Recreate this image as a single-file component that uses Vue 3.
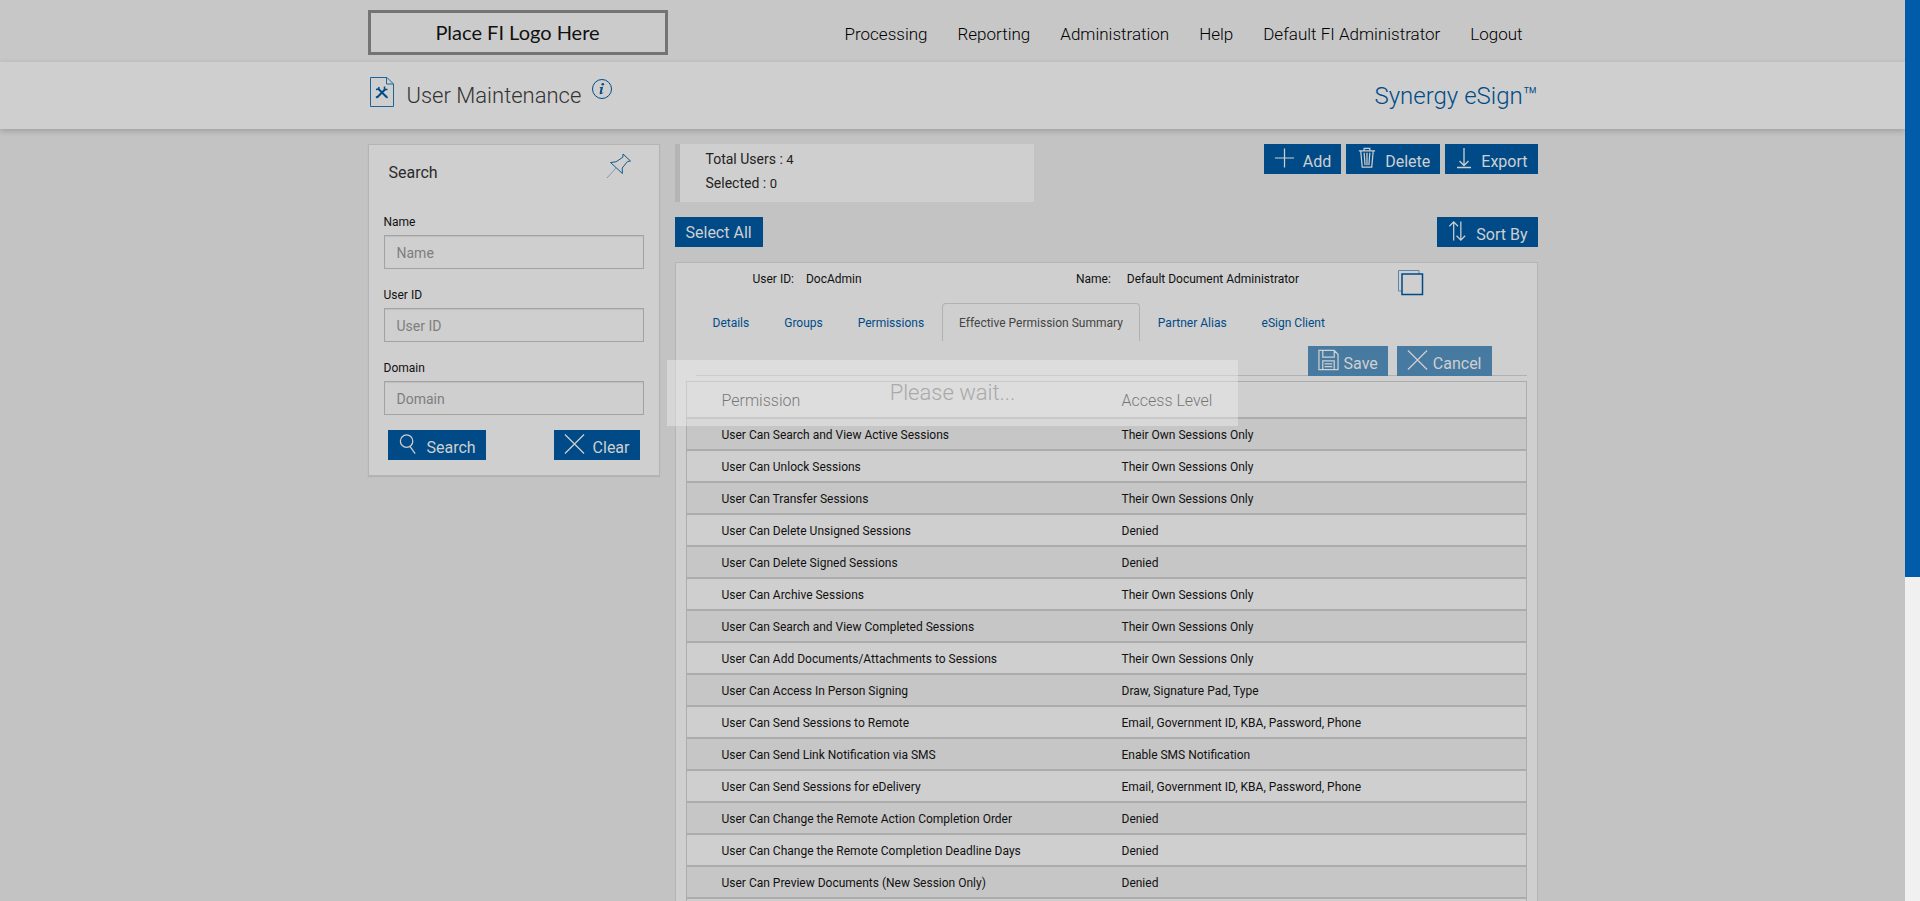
<script setup>
import { ref } from 'vue'

const nav = ['Processing', 'Reporting', 'Administration', 'Help', 'Default FI Administrator', 'Logout']
const fields = [
  { id: 'name', label: 'Name' },
  { id: 'user-id', label: 'User ID' },
  { id: 'domain', label: 'Domain' },
]
const form = ref({ name: '', 'user-id': '', domain: '' })
const tabs = ['Details', 'Groups', 'Permissions', 'Effective Permission Summary', 'Partner Alias', 'eSign Client']
const activeTab = ref('Effective Permission Summary')
const own = 'Their Own Sessions Only'
const rows = [
  ['User Can Search and View Active Sessions', own],
  ['User Can Unlock Sessions', own],
  ['User Can Transfer Sessions', own],
  ['User Can Delete Unsigned Sessions', 'Denied'],
  ['User Can Delete Signed Sessions', 'Denied'],
  ['User Can Archive Sessions', own],
  ['User Can Search and View Completed Sessions', own],
  ['User Can Add Documents/Attachments to Sessions', own],
  ['User Can Access In Person Signing', 'Draw, Signature Pad, Type'],
  ['User Can Send Sessions to Remote', 'Email, Government ID, KBA, Password, Phone'],
  ['User Can Send Link Notification via SMS', 'Enable SMS Notification'],
  ['User Can Send Sessions for eDelivery', 'Email, Government ID, KBA, Password, Phone'],
  ['User Can Change the Remote Action Completion Order', 'Denied'],
  ['User Can Change the Remote Completion Deadline Days', 'Denied'],
  ['User Can Preview Documents (New Session Only)', 'Denied'],
  ['', ''],
]
</script>

<template>
  <div class="window">
    <div class="page">
      <header class="topbar">
        <div class="container topbar-row">
          <div class="logo">Place FI Logo Here</div>
          <nav class="nav">
            <a v-for="item in nav" :key="item" href="#">{{ item }}</a>
          </nav>
        </div>
      </header>

      <div class="titlebar">
        <div class="container title-row">
          <svg class="doc-icon" width="24" height="30" viewBox="0 0 24 30" fill="none" stroke="#004b87">
            <path d="M.5.5H17L23.5 7v22.5H.5zM16.500 1v6H23" stroke="#1d6596" />
            <path d="M8 11.500l8.500 8.500M15.500 12l-8.500 8.500" stroke-width="2" />
            <path d="M6 12.500l2.500-.5.500-2M14.500 9.500v3h3M6 19.500l1.500 1.500M16 19l1.500 2" stroke-width="1.500" />
          </svg>
          <h1>User Maintenance</h1>
          <button class="info" aria-label="Information">
            <svg width="22" height="22" viewBox="0 0 22 22">
              <circle cx="11" cy="11" r="9.500" fill="none" stroke="#004b87" />
              <path d="M8.700 9.300l3.400-.6-1.500 6 .1.400 1.500-.9.200.4c-1 1.100-1.800 1.600-2.700 1.600-1 0-1.200-.6-1-1.400l1-4.400-1-.6z" fill="#004b87" />
              <circle cx="11.800" cy="6.300" r="1.300" fill="#004b87" />
            </svg>
          </button>
          <div class="product">Synergy eSign™</div>
        </div>
      </div>

      <main class="container content">
        <aside class="panel search">
          <div class="search-head">
            <h2>Search</h2>
            <button class="pin" aria-label="Pin search">
              <svg width="26" height="26" viewBox="0 0 26 26" fill="none" stroke="#175987">
                <path d="M17 1l7.500 7-3 .5-5.300 6.500.2 5.500L4.500 9.500l5.500-.7 6.800-4.500z" />
                <path d="M10 15L1 25" stroke="#7d9cb2" />
              </svg>
            </button>
          </div>
          <form @submit.prevent>
            <div v-for="f in fields" :key="f.id" class="field">
              <label :for="f.id">{{ f.label }}</label>
              <input :id="f.id" v-model="form[f.id]" type="text" :placeholder="f.label" />
            </div>
            <div class="search-actions">
              <button class="btn" type="submit">
                <svg class="ico" viewBox="0 0 22 22"><circle cx="9" cy="8" r="6.500" /><path d="M12.500 13.500L18 21" /></svg>
                <span>Search</span>
              </button>
              <button class="btn" type="reset">
                <svg class="ico" viewBox="0 0 22 22"><path d="M1 1l20 20M21 1L1 21" /></svg>
                <span>Clear</span>
              </button>
            </div>
          </form>
        </aside>

        <section class="main">
          <div class="row summary-row">
            <div class="stats">
              <div>Total Users : <small>4</small></div>
              <div>Selected : <small>0</small></div>
            </div>
            <div class="actions">
              <button class="btn">
                <svg class="ico" viewBox="0 0 22 22"><path d="M11 1v20M1 11h20" /></svg>
                <span>Add</span>
              </button>
              <button class="btn">
                <svg class="ico" viewBox="0 0 22 22"><path d="M3 3.500h17M8.500 3V1h6v2M5 4l1.500 16.500h10L18 4M8.500 5.500l1 13M11.500 5.500v13M14.500 5.500l-1 13" /></svg>
                <span>Delete</span>
              </button>
              <button class="btn">
                <svg class="ico narrow" viewBox="2 0 18 22"><path d="M11 1v17M6.500 14l4.500 4.500 4.500-4.500M4 20.500h14" /></svg>
                <span>Export</span>
              </button>
            </div>
          </div>

          <div class="row">
            <button class="btn plain">Select All</button>
            <button class="btn">
              <svg class="ico" viewBox="0 0 22 22"><path d="M7 21V1.500M2.500 6L7 1.500 11.500 6M14.500 1v19.500M10 16l4.500 4.500L19 16" /></svg>
              <span>Sort By</span>
            </button>
          </div>

          <article class="panel card">
            <div class="identity">
              <span class="key">User ID:</span><span class="uid">DocAdmin</span>
              <span class="key">Name:</span><span class="uname">Default Document Administrator</span>
              <button class="pick" aria-label="Select user">
                <svg width="26" height="26" viewBox="0 0 26 26" fill="none">
                  <path d="M4 21H.5V.5H21V4" stroke="#5f86a5" />
                  <rect x="4" y="4" width="20.500" height="20.500" stroke="#004b87" stroke-width="1.500" />
                </svg>
              </button>
            </div>

            <nav class="tabs">
              <a v-for="t in tabs" :key="t" href="#" :class="{ active: t === activeTab }" @click.prevent="activeTab = t">{{ t }}</a>
            </nav>

            <div class="save-row">
              <button class="btn tight" disabled>
                <svg class="ico" viewBox="0 0 22 22"><path d="M1 1h16l4 4v16H1zM5 1v7h12V1M5 21v-9h12v9M7 15h8M7 18h8" /></svg>
                <span>Save</span>
              </button>
              <button class="btn tight" disabled>
                <svg class="ico" viewBox="0 0 22 22"><path d="M1 1l20 20M21 1L1 21" /></svg>
                <span>Cancel</span>
              </button>
            </div>

            <table>
              <thead>
                <tr><th>Permission</th><th>Access Level</th></tr>
              </thead>
              <tbody>
                <tr v-for="r in rows" :key="r[0]"><td>{{ r[0] }}</td><td>{{ r[1] }}</td></tr>
              </tbody>
            </table>
          </article>
        </section>
      </main>

      <div class="wait" role="status">Please wait...</div>
    </div>
    <div class="scrollbar"><div class="thumb"></div></div>
  </div>
</template>

<style>
body {
  background: #c3c3c3;
}
</style>

<style scoped>
* {
  box-sizing: border-box;
}
.window {
  display: grid;
  grid-template-columns: minmax(0, 1fr) 15px;
  height: 100vh;
  overflow: hidden;
  font: 12px/20px Roboto, sans-serif;
  color: #111;
}
.page {
  position: relative;
  overflow: hidden;
  background: #c3c3c3;
}
.scrollbar {
  background: #f0f0f0;
}
.thumb {
  height: 64%;
  background: #005ba8;
}
.container {
  width: 100%;
  max-width: 1170px;
  margin: 0 auto;
}
a {
  text-decoration: none;
}
button {
  font-family: inherit;
  border: 0;
  padding: 0;
  background: none;
}
.topbar {
  background: #c7c7c7;
}
.topbar-row {
  display: flex;
  justify-content: space-between;
  align-items: center;
  height: 62px;
  padding: 3px 15px 0 0;
}
.logo {
  width: 300px;
  height: 45px;
  border: 3px solid #747474;
  background: #cbcbcb;
  font: 400 20px/38px Lato, sans-serif;
  text-align: center;
}
.nav {
  display: flex;
  gap: 30px;
  padding-top: 2px;
}
.nav a {
  font-size: 17px;
  font-weight: 300;
  line-height: 24px;
  color: #000;
}
.titlebar {
  position: relative;
  background: #cfcfcf;
  box-shadow: 0 2px 6px rgba(0, 0, 0, 0.2);
}
.title-row {
  display: flex;
  align-items: flex-start;
  height: 67px;
  padding: 15px 0 0 2px;
}
h1 {
  margin: 3px 0 0 13px;
  font-size: 22px;
  font-weight: 300;
  line-height: 32px;
  color: #333;
}
.info {
  margin: 1px 0 0 10px;
  height: 22px;
}
.product {
  margin: 3px 0 0 auto;
  font-size: 24px;
  font-weight: 300;
  line-height: 32px;
  color: #004b87;
}
.content {
  display: flex;
  align-items: flex-start;
  gap: 15px;
  padding-top: 15px;
}
.panel {
  background: #cfcfcf;
  border: 1px solid #b4b4b4;
}
.search {
  flex: 0 0 292px;
  padding: 8px 15px 15px;
  box-shadow: 0 1px 1px rgba(0, 0, 0, 0.08);
}
.search-head {
  display: flex;
  justify-content: space-between;
  padding: 0 12px 0 5px;
  height: 58px;
}
.search-head h2 {
  margin: 8px 0 0;
  font-size: 16px;
  font-weight: 400;
  line-height: 24px;
  color: #2b2b2b;
}
.pin {
  height: 24px;
}
.pin svg {
  display: block;
}
.field {
  margin-bottom: 15px;
}
.field label {
  display: block;
  line-height: 22px;
  margin-bottom: 2px;
}
.field input {
  display: block;
  width: 100%;
  height: 34px;
  padding: 2px 12px 0;
  border: 1px solid #a3a3a3;
  border-radius: 0;
  background: #cfcfcf;
  box-shadow: inset 0 1px 1px rgba(0, 0, 0, 0.08);
  font: 14px/20px Roboto, sans-serif;
}
.field input::placeholder {
  color: #7e7e7e;
}
.search-actions {
  display: flex;
  justify-content: space-between;
  padding: 0 4px;
}
.btn {
  display: flex;
  align-items: flex-start;
  gap: 8px;
  height: 30px;
  padding: 3px 10px 0;
  background: #004b87;
  color: #cfcfcf;
  font-size: 16px;
  line-height: 20px;
}
.btn span {
  padding-top: 5px;
}
.btn.plain {
  padding: 6px 11px 0;
}
.btn.tight {
  gap: 5px;
}
.btn:disabled {
  background: #477aa1;
}
.ico {
  width: 21px;
  height: 22px;
  fill: none;
  stroke: #cfcfcf;
  stroke-width: 1.3;
}
.ico.narrow {
  width: 18px;
}
.main {
  flex: 1;
  min-width: 0;
}
.row {
  display: flex;
  justify-content: space-between;
  align-items: flex-start;
  margin-bottom: 15px;
}
.stats {
  width: 359px;
  height: 58px;
  padding: 3px 26px;
  border-left: 5px solid #b4b4b4;
  background: #cfcfcf;
  font-size: 14px;
  line-height: 24px;
  color: #222;
}
.stats div {
  height: 24px;
}
.stats small {
  font-size: 13px;
  line-height: 20px;
}
.actions {
  display: flex;
  gap: 5px;
}
.card {
  padding: 7px 10px 0;
}
.identity {
  display: flex;
  height: 33px;
  padding-left: 67px;
  line-height: 18px;
}
.identity .uid {
  width: 282px;
  padding-left: 12px;
}
.identity .uname {
  width: 287px;
  padding-left: 16px;
}
.pick {
  height: 26px;
}
.pick svg {
  display: block;
}
.tabs {
  display: flex;
  gap: 1px;
  padding-left: 10px;
}
.tabs a {
  height: 38px;
  padding: 9px 16px;
  border: 1px solid transparent;
  border-bottom: 0;
  border-radius: 4px 4px 0 0;
  color: #004b87;
}
.tabs a.active {
  border-color: #b1b1b1;
  color: #444;
}
.save-row {
  display: flex;
  justify-content: flex-end;
  gap: 9px;
  margin: 5px 0 5px 10px;
  padding-right: 35px;
  height: 30px;
  box-shadow: inset 0 -1px #b1b1b1;
}
table {
  width: 100%;
  table-layout: fixed;
  border-collapse: separate;
  border-spacing: 0;
  border: 1px solid #acacac;
}
th,
td {
  padding: 2px 0 0 35px;
  height: 32px;
  border-bottom: 2px solid #acacac;
  text-align: left;
}
th {
  height: 37px;
  font-size: 16px;
  font-weight: 300;
}
th:first-child {
  width: 400px;
}
tbody tr:nth-child(odd) {
  background: #c6c6c6;
}
.wait {
  position: absolute;
  top: 40%;
  left: 35%;
  width: 30%;
  height: 66px;
  background: rgba(238, 238, 238, 0.45);
  color: #a9a9a9;
  font-size: 22px;
  font-weight: 300;
  line-height: 66px;
  text-align: center;
}
</style>
